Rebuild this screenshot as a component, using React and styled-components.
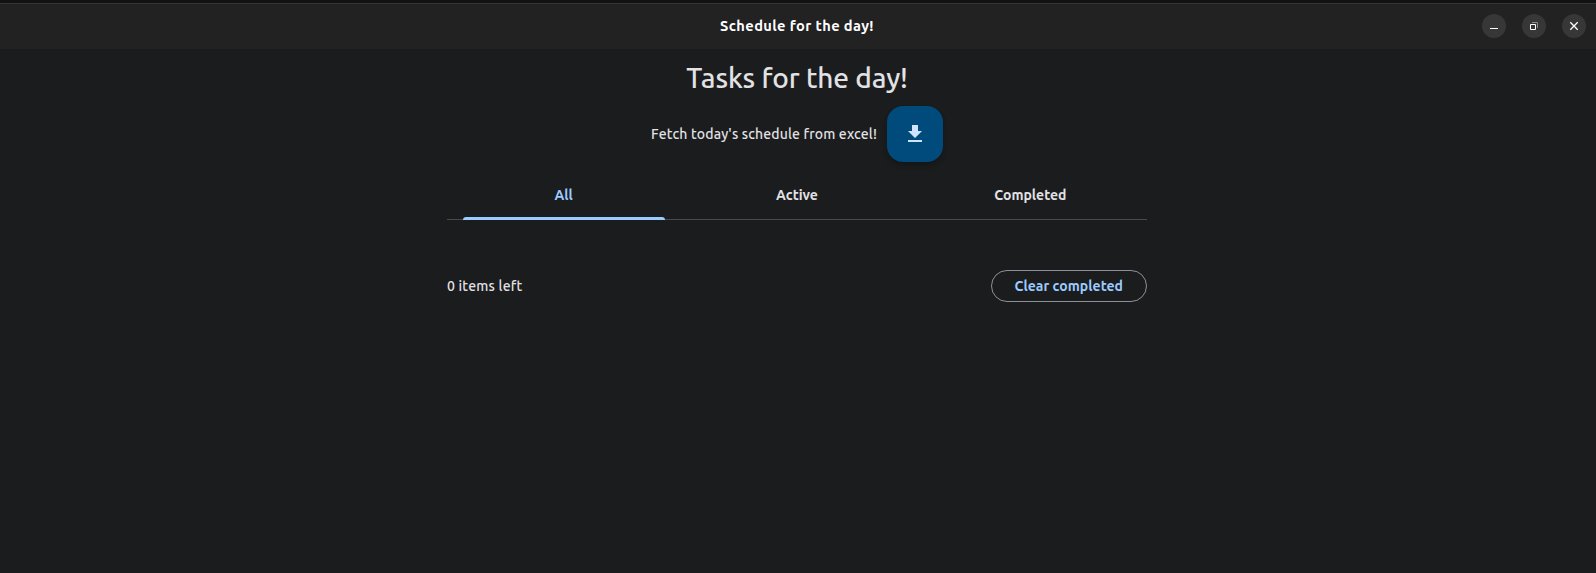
import React from "react";
import styled, { createGlobalStyle } from "styled-components";

const GlobalStyle = createGlobalStyle`
  *, *::before, *::after { box-sizing: border-box; }
  body {
    margin: 0;
    background: #1b1c1e;
    color: #e2e2e5;
    font-family: Ubuntu, "Noto Sans", "Open Sans", sans-serif;
  }
  button { font: inherit; padding: 0; border: 0; background: none; color: inherit; }
`;

const Window = styled.div`
  height: 573px;
  display: flex;
  flex-direction: column;
  overflow: hidden;
  border-top: 3px solid #121212;
`;

const TitleBar = styled.header`
  height: 47px;
  flex: none;
  display: grid;
  grid-template-columns: 1fr auto 1fr;
  align-items: center;
  padding: 0 10px 1px 8px;
  background: #222222;
  border-top: 1px solid #343434;
  border-bottom: 1px solid #1a1a1b;
`;

const Label = styled.span`
  display: block;
  white-space: nowrap;
  line-height: 20px;
  font-size: ${(p) => p.$size || 14}px;
  font-weight: ${(p) => p.$weight || 500};
  letter-spacing: ${(p) => p.$spacing || 0}px;
`;

const WindowTitle = styled(Label)`
  grid-column: 2;
  color: #ffffff;
`;

const Controls = styled.div`
  display: flex;
  justify-content: flex-end;
  gap: 16px;
`;

const Control = styled.button`
  width: 24px;
  height: 24px;
  border-radius: 50%;
  background: #373737;
  svg { display: block; }
`;

const Content = styled.main`
  width: 702px;
  margin: 0 auto;
  padding-right: 2px;
  display: flex;
  flex-direction: column;
  align-items: center;
`;

const Heading = styled.h1`
  margin: 9px 0 0;
  height: 36px;
  line-height: 38px;
  font-size: 28px;
  font-weight: 500;
  letter-spacing: -0.14px;
  white-space: nowrap;
`;

const FetchRow = styled.div`
  margin-top: 11px;
  display: flex;
  align-items: center;
  gap: 10px;
`;

const FetchButton = styled.button`
  width: 56px;
  height: 56px;
  display: grid;
  place-items: center;
  border-radius: 16px;
  background: #004a7c;
  color: #cfe4ff;
  box-shadow: 0 3px 5px -1px rgba(0, 0, 0, 0.2), 0 4px 6px rgba(0, 0, 0, 0.08);
`;

const Tabs = styled.nav`
  width: 100%;
  height: 48px;
  margin-top: 10px;
  display: grid;
  grid-template-columns: repeat(3, 1fr);
  border-bottom: 1px solid #47494d;
`;

const Tab = styled.button`
  height: 48px;
  margin: 0 16px;
  padding-bottom: 2px;
  display: grid;
  place-items: center;
  position: relative;
  color: ${(p) => (p.$active ? "#9bcbff" : "#e2e2e5")};

  &::after {
    content: "";
    display: ${(p) => (p.$active ? "block" : "none")};
    position: absolute;
    inset: auto -0.5px 0 0;
    height: 3px;
    border-radius: 3px 3px 0 0;
    background: #9bcbff;
  }
`;

const Footer = styled.footer`
  width: 100%;
  margin-top: 50px;
  display: flex;
  align-items: center;
  justify-content: space-between;
`;

const ClearButton = styled.button`
  width: 156.5px;
  height: 32px;
  display: grid;
  place-items: center;
  border: 1px solid #8c9199;
  border-radius: 16px;
  color: #9bcbff;
`;

export default function App() {
  return (
    <>
      <GlobalStyle />
      <Window>
        <TitleBar>
          <WindowTitle $weight={700} $size={14.67} $spacing={0.38}>Schedule for the day!</WindowTitle>
          <Controls>
            <Control aria-label="Minimize">
              <svg width="24" height="24" fill="#fff"><path d="M8 14h8v1H8z" /></svg>
            </Control>
            <Control aria-label="Restore">
              <svg width="24" height="24" fill="none" stroke="#fff">
                <path d="M8.5 10.5h5v5h-5z" />
                <path d="M10 8.5h5.5V14" stroke="#8c8c8c" />
              </svg>
            </Control>
            <Control aria-label="Close">
              <svg width="24" height="24" fill="none" stroke="#fff" strokeWidth="1.3">
                <path d="M8.3 8.3l7.4 7.4M15.7 8.3l-7.4 7.4" />
              </svg>
            </Control>
          </Controls>
        </TitleBar>
        <Content>
          <Heading>Tasks for the day!</Heading>
          <FetchRow>
            <Label $spacing={0.155}>Fetch today's schedule from excel!</Label>
            <FetchButton aria-label="Fetch">
              <svg width="24" height="24" viewBox="0 0 24 24" fill="currentColor">
                <path d="M5 20h14v-2H5v2zM19 9h-4V3H9v6H5l7 7 7-7z" />
              </svg>
            </FetchButton>
          </FetchRow>
          <Tabs>
            <Tab $active><Label $weight={600}>All</Label></Tab>
            <Tab><Label $weight={600}>Active</Label></Tab>
            <Tab><Label $weight={600}>Completed</Label></Tab>
          </Tabs>
          <Footer>
            <Label $spacing={0.2}>0 items left</Label>
            <ClearButton><Label $weight={600} $spacing={0.04}>Clear completed</Label></ClearButton>
          </Footer>
        </Content>
      </Window>
    </>
  );
}
